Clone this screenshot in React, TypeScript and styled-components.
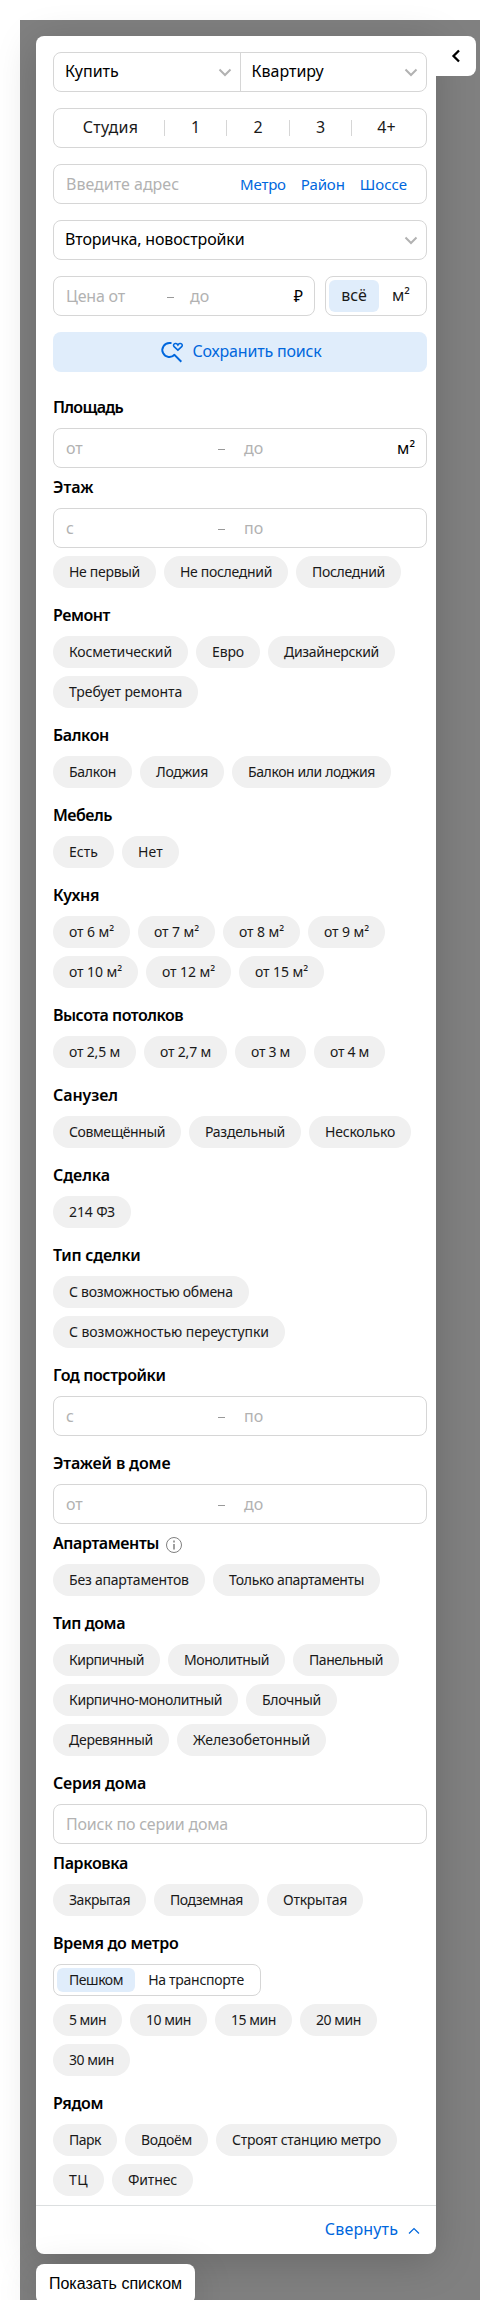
import React from 'react';
import styled, { createGlobalStyle, css } from 'styled-components';

const GlobalStyle = createGlobalStyle`
  *, *::before, *::after { box-sizing: border-box; }
  html, body { margin: 0; padding: 0; background: #fff; }
  body { height: 2300px; overflow: hidden; }
`;

const BORDER = '#d6d6d6';
const BLUE = '#0067dd';
const LIGHT_BLUE = '#e0edfb';
const MUTED = '#b2b2b2';

const Page = styled.div`
  height: 2300px;
  padding: 20px 20px 0;
  overflow: hidden;
  font-family: 'Noto Sans', sans-serif;
  font-size: 16px;
  color: #000;
`;

const Backdrop = styled.div`
  height: 2280px;
  padding: 16px 0 0 16px;
  background: #808080;
`;

const PanelRow = styled.div`
  display: flex;
  align-items: flex-start;
`;

const Panel = styled.aside`
  width: 400px;
  height: 2218px;
  display: flex;
  flex-direction: column;
  background: #fff;
  border-radius: 8px 0 8px 8px;
  box-shadow: 0 8px 40px rgba(0, 0, 0, 0.18);
`;

const CollapseTab = styled.button`
  width: 40px;
  height: 40px;
  display: flex;
  align-items: center;
  justify-content: center;
  padding: 0;
  border: 0;
  border-radius: 0 8px 8px 0;
  background: #fff;
  z-index: 1;
`;

const Filters = styled.div`
  flex: 1;
  padding: 16px 9px 0 17px;
`;

const MainFilters = styled.div`
  display: grid;
  gap: 16px;
  margin-bottom: 26px;
`;

const Frame = styled.div`
  display: flex;
  align-items: center;
  height: 40px;
  border: 1px solid ${BORDER};
  border-radius: 8px;
  background: #fff;
`;

const Select = styled.div<{ $divided?: boolean }>`
  flex: 1;
  display: flex;
  align-items: center;
  justify-content: space-between;
  height: 38px;
  padding: 0 8px 0 11px;
  ${p => p.$divided && css`border-left: 1px solid ${BORDER};`}
`;

const Text = styled.span<{ $tracking?: number }>`
  line-height: 20px;
  white-space: nowrap;
  letter-spacing: ${p => p.$tracking ?? 0}px;
`;

const Label = styled(Text)`
  padding-bottom: 2px;
  display: block;
`;

const Rooms = styled(Frame)`
  color: #1a1a1a;
`;

const Room = styled.div<{ $width: number; $indent?: number }>`
  width: ${p => p.$width}px;
  padding-left: ${p => p.$indent ?? 0}px;
  display: flex;
  justify-content: center;
`;

const RoomDivider = styled.div`
  width: 1px;
  height: 16px;
  background: ${BORDER};
`;

const Address = styled(Frame)`
  padding: 0 19px 0 12px;
  justify-content: space-between;
  color: ${MUTED};
`;

const AddressLinks = styled.div`
  display: flex;
  gap: 15px;
  font-size: 15px;
  color: ${BLUE};
`;

const PriceRow = styled.div`
  display: grid;
  grid-template-columns: 262px 102px;
  justify-content: space-between;
`;

const RangeFrame = styled(Frame)`
  color: ${MUTED};
  padding: 0 11px 0 12px;
`;

const RangeStart = styled.div<{ $width: number }>`
  width: ${p => p.$width}px;
  line-height: 20px;
  white-space: nowrap;
`;

const Dash = styled.span`
  width: 7px;
  height: 1px;
  margin-top: 2px;
  background: #999;
`;

const RangeEnd = styled.div<{ $offset: number }>`
  flex: 1;
  padding-left: ${p => p.$offset}px;
  line-height: 20px;
`;

const Unit = styled.span`
  line-height: 20px;
  color: #000;
`;

const Segments = styled(Frame)<{ $compact?: boolean }>`
  padding: 0 3px;
  color: #1a1a1a;
  ${p => p.$compact && css`
    width: 208px;
    height: 32px;
    margin-bottom: 8px;
    font-size: 14px;
  `}
`;

const Segment = styled.div<{ $width: number; $selected?: boolean; $compact?: boolean }>`
  width: ${p => p.$width}px;
  height: ${p => (p.$compact ? 24 : 32)}px;
  display: flex;
  align-items: center;
  justify-content: center;
  border-radius: 6px;
  background: ${p => (p.$selected ? LIGHT_BLUE : 'transparent')};
`;

const SaveButton = styled.button`
  height: 40px;
  display: flex;
  align-items: center;
  justify-content: center;
  gap: 8px;
  padding: 0 0 0 2px;
  border: 0;
  border-radius: 8px;
  background: ${LIGHT_BLUE};
  color: ${BLUE};
  font: inherit;
`;

const Section = styled.section<{ $tight?: boolean }>`
  margin-bottom: ${p => (p.$tight ? 10 : 18)}px;

  &:last-child { margin-bottom: 0; }
`;

const Heading = styled.h3<{ $tracking: number }>`
  display: flex;
  align-items: flex-start;
  gap: 7px;
  height: 20px;
  margin: 0 0 10px;
  font-size: 16px;
  font-weight: 600;
  line-height: 18px;
  letter-spacing: ${p => p.$tracking}px;
  white-space: nowrap;
`;

const InfoIcon = styled.svg`
  width: 16px;
  height: 16px;
  margin-top: 3px;
`;

const ChipList = styled.div<{ $below?: boolean }>`
  display: flex;
  flex-wrap: wrap;
  gap: 8px;
  ${p => p.$below && css`margin-top: 8px;`}
`;

const ChipButton = styled.button<{ $width: number; $tracking: number }>`
  width: ${p => p.$width}px;
  height: 32px;
  padding: 0 0 0 16px;
  border: 0;
  border-radius: 16px;
  background: #f0f0f0;
  color: #1a1a1a;
  font: 14px/32px 'Noto Sans', sans-serif;
  letter-spacing: ${p => p.$tracking}px;
  text-align: left;
  white-space: nowrap;
`;

const Footer = styled.div`
  flex: none;
  height: 49px;
  display: flex;
  align-items: center;
  justify-content: flex-end;
  gap: 10px;
  padding-right: 16px;
  border-top: 1px solid #dcdfe0;
  color: ${BLUE};
`;

const FooterArrow = styled.svg`
  width: 12px;
  height: 8px;
  margin-top: 2px;
`;

const ShowListButton = styled.button`
  width: 159px;
  height: 40px;
  margin-top: 10px;
  padding: 0;
  border: 0;
  border-radius: 8px;
  background: #fff;
  box-shadow: 0 8px 40px rgba(0, 0, 0, 0.16);
  color: #000;
  font: 16px/38px 'Liberation Sans', Arial, sans-serif;
`;

const Chevron = () => (
  <svg width="14" height="9" viewBox="0 0 14 9" fill="none" stroke="#b2b2b2" strokeWidth="2">
    <path d="M1.5 1.5 7 7l5.500-5.500" />
  </svg>
);

const SearchHeart = () => (
  <svg width="24" height="24" viewBox="0 0 24 24" fill="none" stroke={BLUE} strokeWidth="2">
    <path d="M11.500 3H9.500a7 7 0 1 0 5.300 11.400M14 14.400l7.300 7.300" />
    <path d="M17.900 10.200 14.100 6.700a1.900 1.900 0 0 1 0-2.700c.9-.8 2.600-.7 3.800 1 1.200-1.700 2.900-1.800 3.800-1a1.900 1.900 0 0 1 0 2.700z" strokeWidth="1.600" />
  </svg>
);

const Info = () => (
  <InfoIcon viewBox="0 0 16 16" fill="none" stroke="#808080">
    <circle cx="8" cy="8" r="7.500" />
    <path d="M8 7v5.500M8 3.500v2" strokeWidth="1.500" />
  </InfoIcon>
);

type Chip = [label: string, width: number, tracking: number];

const Chips = ({ items, below }: { items: Chip[]; below?: boolean }) => (
  <ChipList $below={below}>
    {items.map(([label, width, tracking]) => (
      <ChipButton key={label} $width={width} $tracking={tracking}>{label}</ChipButton>
    ))}
  </ChipList>
);

const Range = ({ from, to, unit }: { from: string; to: string; unit?: string }) => (
  <RangeFrame>
    <RangeStart $width={152}>{from}</RangeStart>
    <Dash />
    <RangeEnd $offset={19}>{to}</RangeEnd>
    {unit && <Unit>{unit}</Unit>}
  </RangeFrame>
);

const finishing: Chip[] = [['Косметический', 135, -0.15], ['Евро', 64, -0.12], ['Дизайнерский', 127, -0.32], ['Требует ремонта', 145, -0.07]];
const floors: Chip[] = [['Не первый', 103, -0.3], ['Не последний', 124, -0.31], ['Последний', 105, -0.31]];
const balcony: Chip[] = [['Балкон', 79, -0.28], ['Лоджия', 84, -0.3], ['Балкон или лоджия', 159, -0.4]];
const furniture: Chip[] = [['Есть', 61, 0], ['Нет', 57, 0.15]];
const kitchen: Chip[] = [
  ['от 6 м²', 77, -0.09], ['от 7 м²', 77, -0.09], ['от 8 м²', 77, -0.09], ['от 9 м²', 77, -0.09],
  ['от 10 м²', 85, -0.08], ['от 12 м²', 85, -0.08], ['от 15 м²', 85, -0.08],
];
const ceilings: Chip[] = [['от 2,5 м', 83, -0.19], ['от 2,7 м', 83, -0.19], ['от 3 м', 71, -0.28], ['от 4 м', 71, -0.28]];
const bathroom: Chip[] = [['Совмещённый', 128, -0.4], ['Раздельный', 112, -0.27], ['Несколько', 102, -0.2]];
const deal: Chip[] = [['214 ФЗ', 78, -0.13]];
const dealType: Chip[] = [['С возможностью обмена', 196, -0.27], ['С возможностью переуступки', 232, -0.07]];
const apartments: Chip[] = [['Без апартаментов', 152, -0.21], ['Только апартаменты', 167, -0.36]];
const houseType: Chip[] = [
  ['Кирпичный', 107, -0.48], ['Монолитный', 117, -0.43], ['Панельный', 106, -0.46], ['Кирпично-монолитный', 185, -0.37],
  ['Блочный', 91, -0.31], ['Деревянный', 116, -0.26], ['Железобетонный', 149, -0.09],
];
const parking: Chip[] = [['Закрытая', 93, -0.47], ['Подземная', 105, -0.41], ['Открытая', 96, -0.26]];
const minutes: Chip[] = [['5 мин', 69, -0.54], ['10 мин', 77, -0.45], ['15 мин', 77, -0.45], ['20 мин', 77, -0.45], ['30 мин', 77, -0.45]];
const nearby: Chip[] = [['Парк', 64, -0.5], ['Водоём', 83, -0.27], ['Строят станцию метро', 181, -0.25], ['ТЦ', 51, 0.45], ['Фитнес', 81, -0.15]];

export default function App() {
  return (
    <Page>
      <GlobalStyle />
      <Backdrop>
        <PanelRow>
          <Panel>
            <Filters>
              <MainFilters>
                <Frame>
                  <Select><Label>Купить</Label><Chevron /></Select>
                  <Select $divided><Label>Квартиру</Label><Chevron /></Select>
                </Frame>
                <Rooms>
                  <Room $width={110} $indent={3}><Label $tracking={0.3}>Студия</Label></Room>
                  <RoomDivider />
                  <Room $width={61}><Label>1</Label></Room>
                  <RoomDivider />
                  <Room $width={62}><Label>2</Label></Room>
                  <RoomDivider />
                  <Room $width={61}><Label>3</Label></Room>
                  <RoomDivider />
                  <Room $width={69}><Label>4+</Label></Room>
                </Rooms>
                <Address>
                  <Text>Введите адрес</Text>
                  <AddressLinks>
                    <Text $tracking={-0.2}>Метро</Text>
                    <Text $tracking={-0.1}>Район</Text>
                    <Text>Шоссе</Text>
                  </AddressLinks>
                </Address>
                <Frame>
                  <Select><Label $tracking={-0.15}>Вторичка, новостройки</Label><Chevron /></Select>
                </Frame>
                <PriceRow>
                  <RangeFrame>
                    <RangeStart $width={101}><Text $tracking={-0.2}>Цена от</Text></RangeStart>
                    <Dash />
                    <RangeEnd $offset={16}>до</RangeEnd>
                    <Unit>₽</Unit>
                  </RangeFrame>
                  <Segments>
                    <Segment $width={50} $selected><Label>всё</Label></Segment>
                    <Segment $width={44}><Label>м²</Label></Segment>
                  </Segments>
                </PriceRow>
                <SaveButton><SearchHeart /><Label $tracking={-0.18}>Сохранить поиск</Label></SaveButton>
              </MainFilters>

              <Section $tight>
                <Heading $tracking={-0.7}>Площадь</Heading>
                <Range from="от" to="до" unit="м²" />
              </Section>
              <Section>
                <Heading $tracking={0}>Этаж</Heading>
                <Range from="с" to="по" />
                <Chips items={floors} below />
              </Section>
              <Section>
                <Heading $tracking={-0.45}>Ремонт</Heading>
                <Chips items={finishing} />
              </Section>
              <Section>
                <Heading $tracking={-0.4}>Балкон</Heading>
                <Chips items={balcony} />
              </Section>
              <Section>
                <Heading $tracking={-0.5}>Мебель</Heading>
                <Chips items={furniture} />
              </Section>
              <Section>
                <Heading $tracking={-0.35}>Кухня</Heading>
                <Chips items={kitchen} />
              </Section>
              <Section>
                <Heading $tracking={-0.5}>Высота потолков</Heading>
                <Chips items={ceilings} />
              </Section>
              <Section>
                <Heading $tracking={-0.1}>Санузел</Heading>
                <Chips items={bathroom} />
              </Section>
              <Section>
                <Heading $tracking={-0.1}>Сделка</Heading>
                <Chips items={deal} />
              </Section>
              <Section>
                <Heading $tracking={-0.28}>Тип сделки</Heading>
                <Chips items={dealType} />
              </Section>
              <Section>
                <Heading $tracking={-0.4}>Год постройки</Heading>
                <Range from="с" to="по" />
              </Section>
              <Section $tight>
                <Heading $tracking={-0.15}>Этажей в доме</Heading>
                <Range from="от" to="до" />
              </Section>
              <Section>
                <Heading $tracking={-0.4}>Апартаменты<Info /></Heading>
                <Chips items={apartments} />
              </Section>
              <Section>
                <Heading $tracking={-0.43}>Тип дома</Heading>
                <Chips items={houseType} />
              </Section>
              <Section $tight>
                <Heading $tracking={-0.26}>Серия дома</Heading>
                <RangeFrame><Text $tracking={-0.2}>Поиск по серии дома</Text></RangeFrame>
              </Section>
              <Section>
                <Heading $tracking={-0.35}>Парковка</Heading>
                <Chips items={parking} />
              </Section>
              <Section>
                <Heading $tracking={-0.32}>Время до метро</Heading>
                <Segments $compact>
                  <Segment $compact $width={78} $selected><Text $tracking={-0.45}>Пешком</Text></Segment>
                  <Segment $compact $width={122}><Text $tracking={-0.28}>На транспорте</Text></Segment>
                </Segments>
                <Chips items={minutes} />
              </Section>
              <Section>
                <Heading $tracking={-0.4}>Рядом</Heading>
                <Chips items={nearby} />
              </Section>
            </Filters>
            <Footer>
              <Label $tracking={0.15}>Свернуть</Label>
              <FooterArrow viewBox="0 0 12 8" fill="none" stroke={BLUE} strokeWidth="1.200">
                <path d="m1 6.500 5-5 5 5" />
              </FooterArrow>
            </Footer>
          </Panel>
          <CollapseTab aria-label="Свернуть панель">
            <svg width="10" height="14" viewBox="0 0 10 14" fill="none" stroke="#000" strokeWidth="2.300">
              <path d="M8 1.500 2.500 7 8 12.500" />
            </svg>
          </CollapseTab>
        </PanelRow>
        <ShowListButton>Показать списком</ShowListButton>
      </Backdrop>
    </Page>
  );
}
